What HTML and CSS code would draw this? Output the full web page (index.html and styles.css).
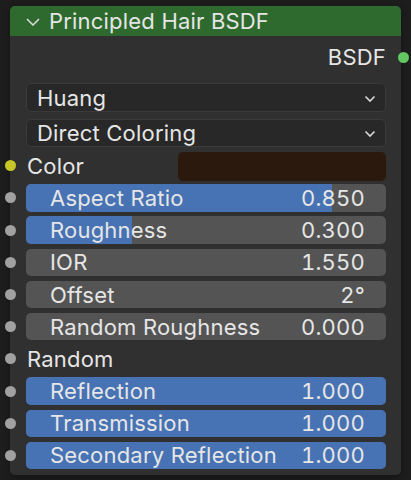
FILE: index.html
```html
<!DOCTYPE html>
<html>
<head>
<meta charset="utf-8">
<link rel="stylesheet" href="styles.css">
</head>
<body>
<div class="node">
  <div class="header">
    <svg class="hchev" width="14" height="8" viewBox="0 0 14 8"><path d="M1 1 L7 7 L13 1" fill="none" stroke="#d8d8d8" stroke-width="1.6"/></svg>
    <span class="title">Principled Hair BSDF</span>
  </div>
  <div class="body">
    <div class="row out">
      <span>BSDF</span>
      <span class="sock sock-out green"></span>
    </div>
    <div class="drop first"><span>Huang</span><svg class="dchev" width="12" height="8" viewBox="0 0 12 8"><path d="M1.5 1.5 L6 6 L10.5 1.5" fill="none" stroke="#d8d8d8" stroke-width="1.6"/></svg></div>
    <div class="drop second"><span>Direct Coloring</span><svg class="dchev" width="12" height="8" viewBox="0 0 12 8"><path d="M1.5 1.5 L6 6 L10.5 1.5" fill="none" stroke="#d8d8d8" stroke-width="1.6"/></svg></div>
    <div class="list">
      <div class="row colorrow">
        <span class="sock yellow"></span>
        <span class="lbl">Color</span>
        <span class="swatch"></span>
      </div>
      <div class="row slider"><span class="sock gray"></span><span class="fill" style="width:85%"></span><span class="name">Aspect Ratio</span><span class="val">0.850</span></div>
      <div class="row slider"><span class="sock gray"></span><span class="fill" style="width:29.4%"></span><span class="name">Roughness</span><span class="val">0.300</span></div>
      <div class="row slider"><span class="sock gray"></span><span class="name">IOR</span><span class="val">1.550</span></div>
      <div class="row slider"><span class="sock gray"></span><span class="name">Offset</span><span class="val">2°</span></div>
      <div class="row slider"><span class="sock gray"></span><span class="name">Random Roughness</span><span class="val">0.000</span></div>
      <div class="row plain"><span class="sock gray"></span><span class="lbl">Random</span></div>
      <div class="row slider"><span class="sock gray"></span><span class="fill full" style="width:100%"></span><span class="name">Reflection</span><span class="val">1.000</span></div>
      <div class="row slider"><span class="sock gray"></span><span class="fill full" style="width:100%"></span><span class="name">Transmission</span><span class="val">1.000</span></div>
      <div class="row slider"><span class="sock gray"></span><span class="fill full" style="width:100%"></span><span class="name">Secondary Reflection</span><span class="val">1.000</span></div>
    </div>
  </div>
</div>
</body>
</html>
```
FILE: styles.css
```css
html, body {
  margin: 0;
  padding: 0;
  background: #1d1d1d;
  width: 411px;
  height: 480px;
  overflow: hidden;
}
body {
  font-family: Inter, "Noto Sans", sans-serif;
  font-size: 22px;
  letter-spacing: 0.2px;
  color: #e6e6e6;
}
.node {
  margin: 6px 0 0 10px;
  width: 391px;
  height: 469px;
  background: #303030;
  border-radius: 5px;
  box-shadow: 0 2px 6px rgba(0,0,0,0.35);
}
.header {
  height: 30px;
  background: #2e6a2e;
  border-radius: 5px 5px 0 0;
  display: flex;
  align-items: center;
  box-sizing: border-box;
  padding-left: 16px;
}
.hchev { margin-right: 9px; margin-top: 1px; }
.title { line-height: 30px; }
.body {
  padding: 0 15px 0 16px;
  display: flex;
  flex-direction: column;
}
.row {
  position: relative;
  display: flex;
  align-items: center;
  box-sizing: border-box;
}
.out {
  margin-top: 7px;
  height: 28px;
  justify-content: flex-end;
}
.drop {
  height: 29px;
  box-sizing: border-box;
  background: #282828;
  border: 1px solid #3a3a3a;
  border-radius: 5px;
  display: flex;
  align-items: center;
  justify-content: space-between;
  padding: 0 9px 0 10px;
}
.drop.first { margin-top: 12px; }
.drop.second { margin-top: 7px; height: 28px; }
.dchev { margin-top: 2px; }
.list {
  margin-top: 5px;
  display: flex;
  flex-direction: column;
  gap: 4.7px;
}
.list .row { height: 27.5px; }
.colorrow { justify-content: space-between; }
.lbl { padding-left: 1px; }
.swatch {
  width: 208px;
  height: 29px;
  background: #2b190d;
  border-radius: 5px;
  margin-top: 1px;
}
.slider {
  background: #545454;
  border-radius: 5px;
  justify-content: space-between;
  padding: 0 21px 0 24px;
}
.fill {
  position: absolute;
  left: 0;
  top: 0;
  bottom: 0;
  background: #4772b3;
  border-radius: 5px 0 0 5px;
}
.fill.full { border-radius: 5px; }
.name, .val { position: relative; }
.val { font-variant-numeric: tabular-nums; }
.sock {
  position: absolute;
  width: 11px;
  height: 11px;
  border-radius: 50%;
  left: -21.5px;
  top: 50%;
  margin-top: -5.5px;
}
.sock-out { left: auto; right: -22.5px; margin-top: -5px; }
.green { background: #63c763; }
.yellow { background: #c7c729; }
.gray { background: #a1a1a1; }
```
